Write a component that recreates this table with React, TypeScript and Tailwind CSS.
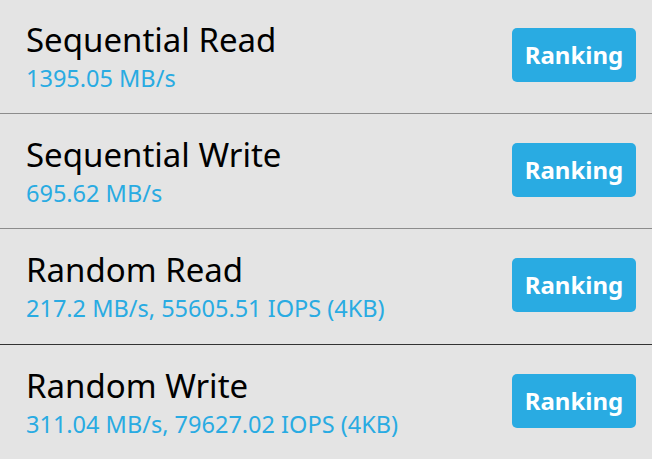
const rows = [
  { title: "Sequential Read", value: "1395.05 MB/s" },
  { title: "Sequential Write", value: "695.62 MB/s" },
  { title: "Random Read", value: "217.2 MB/s, 55605.51 IOPS (4KB)" },
  { title: "Random Write", value: "311.04 MB/s, 79627.02 IOPS (4KB)" },
];

const heights = ["h-[114px] pt-[20px]", "h-[115px] pt-[21px]", "h-[116px] pt-[21px]", "h-[114px] pt-[21px]"];

export default function App() {
  return (
    <div
      className="w-[652px] h-[459px] overflow-hidden bg-[#e4e4e4]"
      style={{ fontFamily: '"Noto Sans", sans-serif' }}
    >
      {rows.map((r, i) => (
        <div
          key={r.title}
          className={`flex items-start justify-between pl-[26px] pr-[16px] ${heights[i]} ${
            i === 3 ? "" : "border-b"
          } ${i === 2 ? "border-[#333333]" : "border-[#8c8c8c]"}`}
        >
          <div className="flex flex-col">
            <div className="text-[33px] leading-[40px] text-black">{r.title}</div>
            <div className="text-[23.5px] leading-[37px] text-[#29abe2]">{r.value}</div>
          </div>
          <button className="mt-[8px] w-[124px] h-[54px] rounded-[5px] bg-[#29abe2] text-white font-bold text-[24px]">
            Ranking
          </button>
        </div>
      ))}
    </div>
  );
}
